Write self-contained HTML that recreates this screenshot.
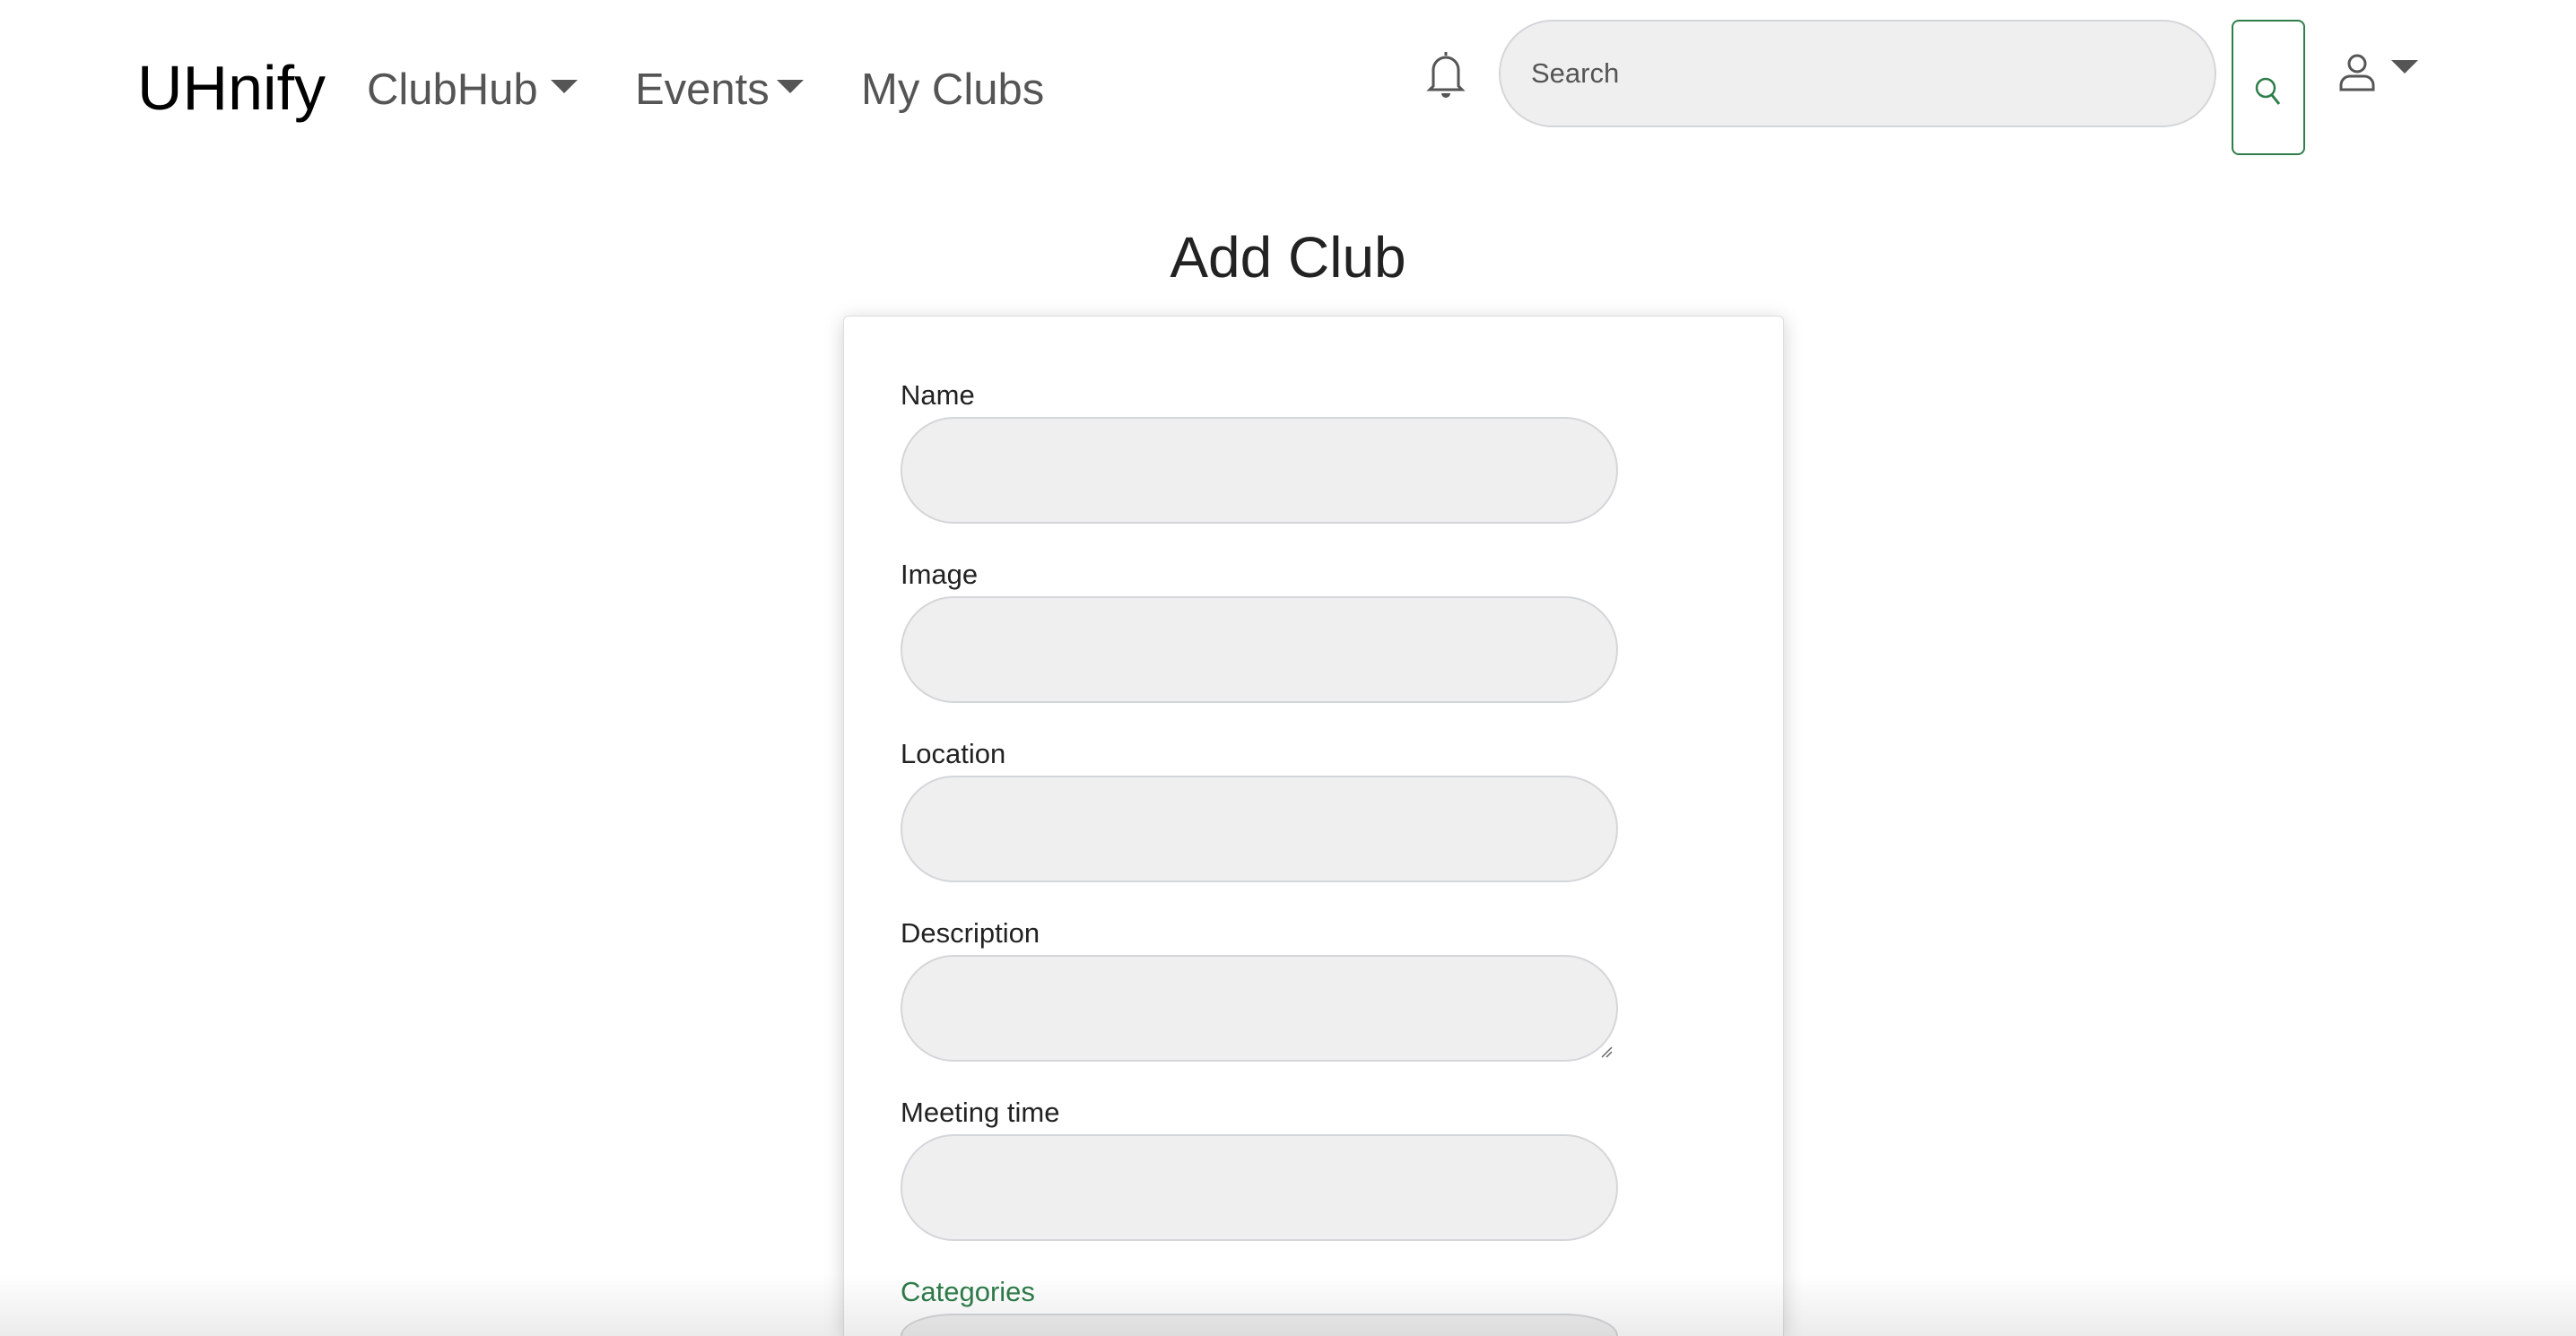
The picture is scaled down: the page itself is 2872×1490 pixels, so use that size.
<!DOCTYPE html>
<html><head><meta charset="utf-8"><style>
*{box-sizing:border-box;margin:0;padding:0}
html,body{width:2872px;height:1490px;overflow:hidden;background:#fff;font-family:"Liberation Sans",sans-serif}
#wrap{position:relative;width:2872px;height:1490px;overflow:hidden}
.abs{position:absolute}
.brand{left:153px;top:58px;font-size:70px;color:#000;line-height:80px}
.nav{top:70px;font-size:49px;color:#555;line-height:60px}
.tri{width:0;height:0;border-left:15px solid transparent;border-right:15px solid transparent;border-top:15px solid #555}
.search{left:1671px;top:22px;width:800px;height:120px;border-radius:60px;background:#efefef;border:2px solid #d4d6da;font-size:31px;color:#555;padding:40px 0 0 34px}
.sbtn{left:2488px;top:22px;width:82px;height:151px;border:2px solid #2e7d4a;border-radius:8px}
h1{position:absolute;left:0;width:2872px;text-align:center;top:250px;font-weight:normal;font-size:64px;color:#222}
.card{left:940px;top:352px;width:1049px;height:1138px;background:#fff;border:1px solid #ddd;border-bottom:none;border-radius:6px 6px 0 0;box-shadow:0 4px 22px rgba(0,0,0,.18)}
.lbl{left:1004px;font-size:31px;color:#222}
.inp{left:1004px;width:800px;height:119px;border-radius:60px;background:#efefef;border:2px solid #d4d6da}
.fade{left:0;top:1420px;width:2872px;height:70px;background:linear-gradient(rgba(0,0,0,0),rgba(0,0,0,.08))}
</style></head><body><div id="wrap">
<div class="abs brand">UHnify</div>
<div class="abs nav" style="left:409px">ClubHub</div>
<div class="abs tri" style="left:614px;top:89px"></div>
<div class="abs nav" style="left:708px">Events</div>
<div class="abs tri" style="left:866px;top:89px"></div>
<div class="abs nav" style="left:960px">My Clubs</div>
<svg class="abs" style="left:1588px;top:54px" width="48" height="56" viewBox="0 0 48 56"><path d="M24 4v4M10 42V24a14 14 0 0 1 28 0v18l4 4H6z" fill="none" stroke="#555" stroke-width="3"/><path d="M19 50a5 5 0 0 0 10 0z" fill="#555"/></svg>
<div class="abs search">Search</div>
<div class="abs sbtn"></div>
<svg class="abs" style="left:2512px;top:84px" width="34" height="38" viewBox="0 0 34 38"><circle cx="14" cy="14" r="10" fill="none" stroke="#2e7d4a" stroke-width="2.5"/><path d="M21 22l8 10" stroke="#2e7d4a" stroke-width="3"/></svg>
<svg class="abs" style="left:2606px;top:60px" width="44" height="42" viewBox="0 0 44 42"><circle cx="22" cy="11" r="9" fill="none" stroke="#555" stroke-width="3"/><path d="M4 40v-5a10 10 0 0 1 10-10h16a10 10 0 0 1 10 10v5z" fill="none" stroke="#555" stroke-width="3"/></svg>
<div class="abs tri" style="left:2666px;top:67px"></div>
<h1>Add Club</h1>
<div class="abs card"></div>
<div class="abs lbl" style="top:423px">Name</div>
<div class="abs inp" style="top:465px"></div>
<div class="abs lbl" style="top:623px">Image</div>
<div class="abs inp" style="top:665px"></div>
<div class="abs lbl" style="top:823px">Location</div>
<div class="abs inp" style="top:865px"></div>
<div class="abs lbl" style="top:1023px">Description</div>
<div class="abs inp" style="top:1065px"></div>
<svg class="abs" style="left:1784px;top:1166px" width="14" height="14"><path d="M2 13L13 2M7 13L13 7" stroke="#666" stroke-width="1.5"/></svg>
<div class="abs lbl" style="top:1223px">Meeting time</div>
<div class="abs inp" style="top:1265px"></div>
<div class="abs lbl" style="top:1423px;color:#2e7d4a">Categories</div>
<div class="abs inp" style="top:1465px;height:25px;border-bottom:none;border-radius:60px 60px 0 0/25px 25px 0 0"></div>
<div class="abs fade"></div>
</div></body></html>
